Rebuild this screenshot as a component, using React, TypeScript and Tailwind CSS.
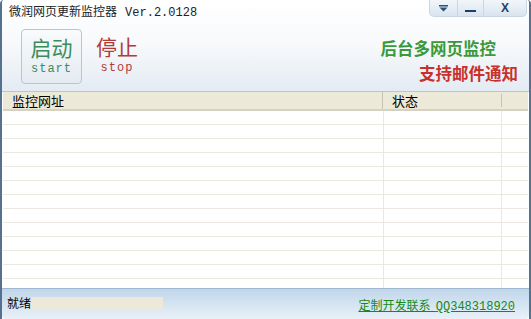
import React from 'react';

const rows = Array.from({ length: 13 }, (_, i) => i);

const App: React.FC = () => {
  return (
    <div
      className="w-[531px] h-[319px] flex flex-col overflow-hidden bg-white border-x-2 border-[#54718f] rounded-t-[4px] text-black"
      style={{ fontFamily: '"Noto Sans CJK SC", sans-serif' }}
    >
      {/* title + toolbar */}
      <div className="h-[92px] shrink-0 flex flex-col bg-gradient-to-b from-white via-[#f7f9fb] to-[#e3ebf3] border-b border-[#b7c6d4]">
        <div className="h-[22px] flex items-start justify-between">
          <div className="pl-[7px] pt-[3px] text-[12px] leading-[16px] text-[#222]">
            微润网页更新监控器&nbsp;&nbsp;&nbsp;<span style={{ fontFamily: '"Liberation Mono", monospace' }}>Ver.2.0128</span>
          </div>
          <div className="flex h-[17px] mr-[2px] rounded-b-[5px] overflow-hidden border border-t-0 border-[#c9d6e3] bg-gradient-to-b from-[#f2f6fa] to-[#d9e4ef]">
            <div className="w-[28px] flex items-center justify-center border-r border-[#c9d6e3]">
              <svg width="9" height="7" viewBox="0 0 9 7">
                <rect x="0" y="0" width="9" height="1.5" fill="#2a4f7a" />
                <path d="M0.5 2.5 H8.5 L4.5 6.5 Z" fill="#2a4f7a" />
              </svg>
            </div>
            <div className="w-[26px] flex items-end justify-center pb-[4px] border-r border-[#c9d6e3]">
              <div className="w-[11px] h-[2px] bg-[#1f3f66]" />
            </div>
            <div className="w-[42px] flex items-center justify-center text-[12px] font-bold text-[#1f3f66] leading-none" style={{ fontFamily: '"Liberation Sans", sans-serif' }}>
              X
            </div>
          </div>
        </div>
        <div className="flex-1 flex items-start justify-between">
          <div className="flex items-start pl-[19px] pt-[7px] gap-[14px]">
            <div className="w-[61px] h-[55px] rounded-[4px] border border-[#b9c6d2] bg-gradient-to-b from-[#f9fbfc] to-[#e4ebf1] flex flex-col items-center pt-[6px]">
              <div className="text-[21px] leading-[22px] text-[#3b8c5a]">启动</div>
              <div className="mt-[5px] text-[12px] leading-[12px] text-[#3b8c5a] tracking-[1px]" style={{ fontFamily: '"Liberation Mono", monospace' }}>start</div>
            </div>
            <div className="flex flex-col items-center pt-[6px]">
              <div className="text-[21px] leading-[22px] text-[#b23a3a]">停止</div>
              <div className="mt-[5px] text-[12px] leading-[12px] text-[#b23a3a] tracking-[1px]" style={{ fontFamily: '"Liberation Mono", monospace' }}>stop</div>
            </div>
          </div>
          <div className="flex flex-col items-end pr-[11px] pt-[17px] font-bold">
            <div className="text-[16.5px] leading-[18px] text-[#3a9a3a] mr-[22px]">后台多网页监控</div>
            <div className="text-[16.5px] leading-[18px] text-[#c9302c] mt-[7px]">支持邮件通知</div>
          </div>
        </div>
      </div>

      {/* list */}
      <div className="flex-1 flex flex-col px-[1px] bg-white overflow-hidden">
        <div className="h-[19px] shrink-0 flex bg-[#ece9d8] border-b-2 border-[#d6d2c2] text-[13px] leading-[18px]">
          <div className="w-[380px] pl-[9px] border-r border-[#c7c4b4]">监控网址</div>
          <div className="w-[119px] pl-[9px] border-r border-[#c7c4b4] my-[2px] leading-[14px]">状态</div>
          <div className="flex-1" />
        </div>
        <div className="flex-1 flex flex-col overflow-hidden">
          {rows.map((r) => (
            <div key={r} className="h-[14px] shrink-0 flex border-b border-[#ebe9df]">
              <div className="w-[381px] border-r border-[#ebe9df]" />
              <div className="w-[118px] border-r border-[#ebe9df]" />
              <div className="flex-1" />
            </div>
          ))}
        </div>
      </div>

      {/* status bar */}
      <div className="h-[31px] shrink-0 flex items-start justify-between bg-gradient-to-b from-[#c0d6ea] to-[#e9f1f8] border-t border-[#9fb8cf] rounded-b-[4px]">
        <div className="flex items-center pl-[5px] pt-[7px]">
          <span className="text-[12px] leading-[14px]">就绪</span>
          <div className="w-[132px] h-[13px] bg-[#ece9d8]" />
        </div>
        <div className="pr-[14px] pt-[9px] text-[12px] leading-[14px] text-[#168a16] underline">
          定制开发联系&nbsp;&nbsp;<span style={{ fontFamily: '"Liberation Mono", monospace' }}>QQ348318920</span>
        </div>
      </div>
    </div>
  );
};

export default App;
